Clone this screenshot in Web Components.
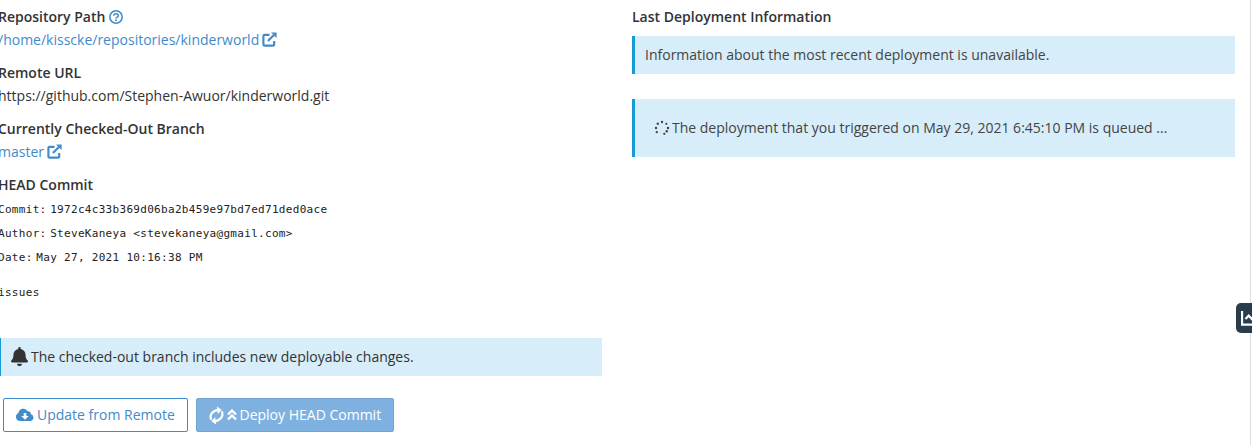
<!DOCTYPE html>
<html lang="en"><head><meta charset="utf-8"><title>Deployment</title>
<style>html,body{margin:0;background:#fff;overflow:hidden}body{font:14px/22px "Open Sans",sans-serif;color:#333}</style></head>
<body><deploy-page></deploy-page>
<script>
const icons={
help:['0 0 512 512','<circle cx="256" cy="256" r="226" fill="none" stroke="currentColor" stroke-width="56"/><path d="M173 205c5-94 169-94 169 4 0 59-84 58-84 100" fill="none" stroke="currentColor" stroke-width="56"/><circle cx="257" cy="376" r="36"/>'],
external:['0 0 16 16','<path d="M8 3H2.800Q1.500 3 1.500 4.300v8.900q0 1.300 1.300 1.300h8.900q1.300 0 1.300-1.300V9.500M6.300 9.700 13 3" fill="none" stroke="currentColor" stroke-width="2.300"/><path d="M9.600.4h6v6l-2-2L11.600 2.400z"/>'],
bell:['0 0 448 512','<path d="M224 512c35.300 0 63.970-28.650 63.970-64H160.030c0 35.350 28.670 64 63.970 64zm215.390-149.710c-19.320-20.760-55.470-51.990-55.470-154.290 0-77.700-54.480-139.900-127.940-155.160V32c0-17.670-14.320-32-31.980-32s-31.980 14.330-31.980 32v20.840C118.560 68.100 64.080 130.300 64.080 208c0 102.300-36.150 133.530-55.470 154.290C2.610 368.740 0 376.450.020 384c.05 16.400 12.980 32 32.100 32h383.800c19.120 0 32.080-15.600 32.080-32 0-7.550-2.610-15.270-8.610-21.710z"/>'],
cloud:['0 0 18 14','<path fill-rule="evenodd" d="M4.300 13A4.200 4.200 0 0 1 2.400 5 5 5 0 0 1 11.700 3.200 3.200 3.200 0 0 1 15 6.200 3.500 3.500 0 0 1 14.600 13zM7.700 5v3H5.300L9 11.700 12.700 8h-2.400V5z"/>'],
sync:['0 0 16 20','<g fill="none" stroke="currentColor" stroke-width="2.300"><path d="M2.500 14.500C0 10 3.500 4.500 10 4M13.500 5.500c2.500 4.500-1 10-7.500 10.500"/></g><path d="M8.300.5 13.500 4 9.500 8.300zM7.700 19.500 2.500 16l4-4.300z"/>'],
up:['0 0 10 12','<path d="m1 5.500 4-4 4 4M1 10.500l4-4 4 4" fill="none" stroke="currentColor" stroke-width="2.300"/>'],
spinner:['0 0 16 16','<circle cx="8" cy="2" r="1.200"/><circle cx="12.300" cy="3.800" r="1.100"/><circle cx="14" cy="8" r="1.250"/><circle cx="12.800" cy="11.300" r="1.200"/><circle cx="10.300" cy="13.800" r="1.150"/><circle cx="2.800" cy="12.200" r="1.150"/><circle cx="2" cy="8" r="1.200"/><circle cx="3.800" cy="3.800" r="1.200"/>'],
chart:['0 0 20 16','<path d="M1.200 0v14.600H20M5 8.500 8.500 5l4 4 4-4" fill="none" stroke="currentColor" stroke-width="2.400"/>']};
function define(name,html){const t=document.createElement('template');t.innerHTML=html;
 customElements.define(name,class extends HTMLElement{constructor(){super();this.attachShadow({mode:'open'}).append(t.content.cloneNode(true));}});}
customElements.define('ui-icon',class extends HTMLElement{constructor(){super();this.attachShadow({mode:'open'});}
 connectedCallback(){const [v,p]=icons[this.getAttribute('name')];this.shadowRoot.innerHTML=`<style>:host{display:block;flex:none}svg{display:block;width:100%;height:100%;fill:currentColor}</style><svg viewBox="${v}" preserveAspectRatio="none">${p}</svg>`;}});
define('info-field','<style>:host{display:block;height:56px}.label{font-weight:600;height:23px;display:flex;align-items:center}.value{height:23px;display:flex;align-items:center;white-space:pre}</style><div class="label"><slot name="label"></slot></div><div class="value"><slot></slot></div>');
define('commit-line','<style>:host{display:block;height:24px;line-height:24px;white-space:nowrap}.mono{font:11px/24px "DejaVu Sans Mono",monospace;letter-spacing:.308px;color:#222}</style><span class="mono"><slot name="key"></slot></span> <span class="mono"><slot></slot></span>');
define('info-alert','<style>:host{display:flex;align-items:center;box-sizing:border-box;height:38px;border-left:3px solid #179bd7;background:#d7edf9;padding-left:10px;white-space:nowrap}</style><slot></slot>');
define('action-button','<style>:host{display:block}button{all:unset;box-sizing:border-box;width:100%;height:34px;border:1px solid #428bca;border-radius:2px;color:#428bca;display:flex;align-items:center;padding-left:12px;white-space:nowrap}:host([primary]) button{background:#7fb1e0;border-color:#72a3d1;color:#fff}</style><button><slot></slot></button>');
define('side-tab','<style>:host{position:absolute;right:-2px;top:303px;width:16px;height:30px;border-radius:5px 0 0 5px;background:#2b3d4c;color:#fff;overflow:hidden}ui-icon{width:18px;height:15px;margin:8px 0 0 5px}</style><ui-icon name="chart"></ui-icon>');
define('deploy-page',`<style>
:host{display:grid;grid-template-columns:604px 603px;column-gap:30px;margin-left:-2px;width:1253px;height:445px;box-sizing:border-box;border-right:1px solid #ddd;position:relative}
.left{padding-top:5px}.right{padding-top:5px}.link{color:#428bca}.help{width:14px;height:14px;margin-left:4px;color:#428bca}.ext{width:15px;height:15px;margin-left:3px;color:#428bca}
.head{font-weight:600;height:22px;padding-top:1px}.message{margin-top:11px}.notice{margin-top:35px}.bell{width:17px;height:19px;margin:-2px 3px 0 0}.left info-alert{padding-left:10px}
.actions{display:flex;gap:8px;margin:22px 0 0 5px}.update{width:185px}.deploy{width:198px}.cloud{width:18px;height:14px;margin-right:3px}.sync{width:15px;height:19px}.up{width:10px;height:12px;margin:0 3px 0 2.500px}
.right .head{height:30px;padding-top:1px}.queued{height:58px;margin-top:25px;padding-left:19px}.spin{width:16px;height:16px;margin-right:2px}.right info-alert{color:#444}
</style><section class="left">
<info-field><span slot="label">Repository Path</span><ui-icon slot="label" class="help" name="help"></ui-icon><span class="link">/home/kisscke/repositories/kinderworld</span><ui-icon class="ext" name="external"></ui-icon></info-field>
<info-field><span slot="label">Remote URL</span><span>https://github.com/Stephen-Awuor/kinderworld.git</span></info-field>
<info-field><span slot="label">Currently Checked-Out Branch</span><span class="link">master</span><ui-icon class="ext" name="external"></ui-icon></info-field>
<div class="head">HEAD Commit</div>
<commit-line><span slot="key">Commit:</span>1972c4c33b369d06ba2b459e97bd7ed71ded0ace</commit-line>
<commit-line><span slot="key">Author:</span>SteveKaneya &lt;stevekaneya@gmail.com&gt;</commit-line>
<commit-line><span slot="key">Date:</span>May 27, 2021 10:16:38 PM</commit-line>
<commit-line class="message"><span slot="key">issues</span></commit-line>
<info-alert class="notice"><ui-icon class="bell" name="bell"></ui-icon><span>The checked-out branch includes new deployable changes.</span></info-alert>
<div class="actions"><action-button class="update"><ui-icon class="cloud" name="cloud"></ui-icon><span>Update from Remote</span></action-button><action-button primary class="deploy"><ui-icon class="sync" name="sync"></ui-icon><ui-icon class="up" name="up"></ui-icon><span>Deploy HEAD Commit</span></action-button></div>
</section><section class="right"><div class="head">Last Deployment Information</div>
<info-alert><span>Information about the most recent deployment is unavailable.</span></info-alert>
<info-alert class="queued"><ui-icon class="spin" name="spinner"></ui-icon><span>The deployment that you triggered on May 29, 2021 6:45:10 PM is queued ...</span></info-alert></section><side-tab></side-tab>`);
</script></body></html>
